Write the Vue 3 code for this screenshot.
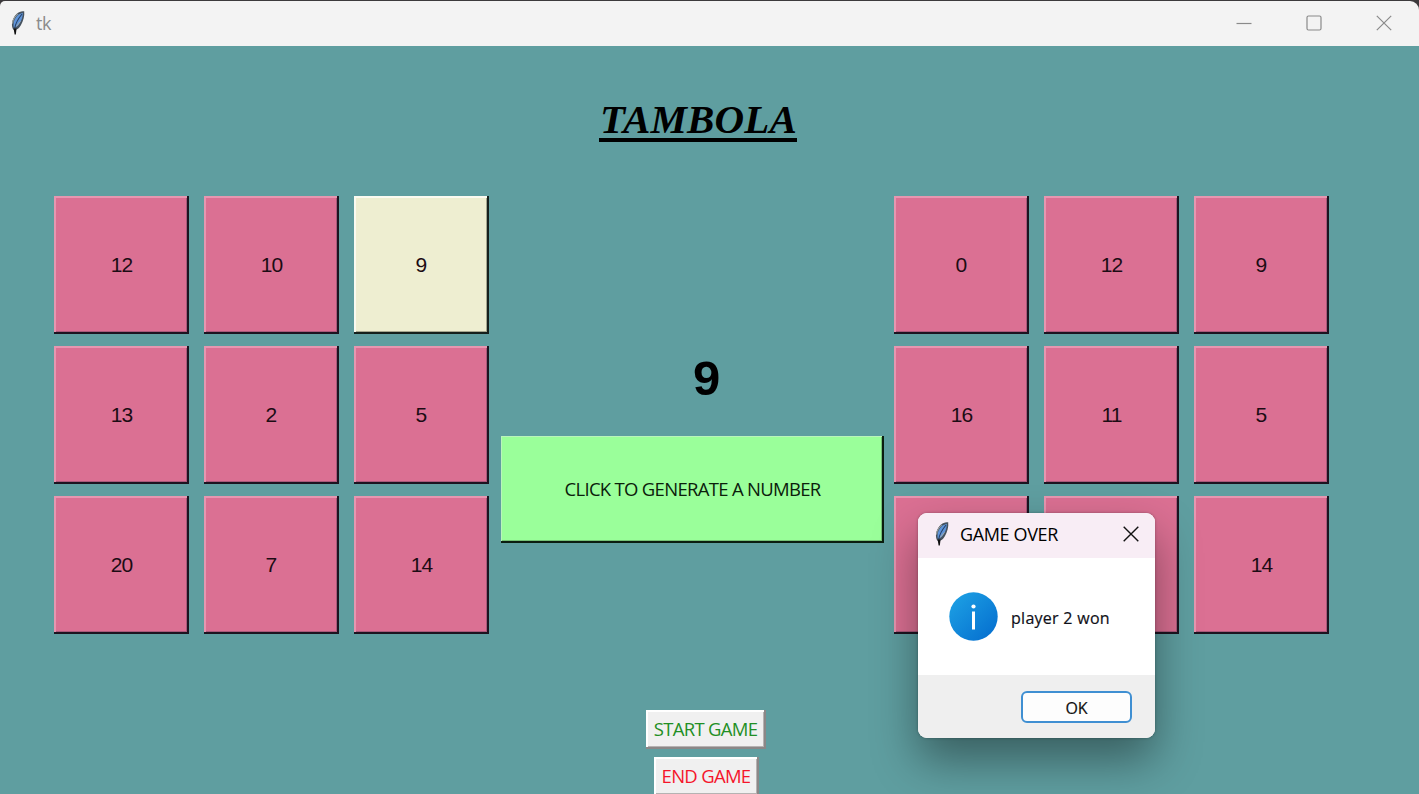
<script setup>
const leftTicket = [12, 10, 9, 13, 2, 5, 20, 7, 14]
const rightTicket = [0, 12, 9, 16, 11, 5, '', '', 14]
const boards = [
  { side: 'left', cells: leftTicket, marked: [2] },
  { side: 'right', cells: rightTicket, marked: [] },
]
</script>

<template>
  <div class="window">
    <header class="titlebar">
      <svg class="feather" width="16" height="26" viewBox="0 0 16 26">
        <path d="M3.800 20C0.800 17 1.300 9 6.500 4C9 1.500 12 0.800 14.200 1.300C14.800 6 13.300 11 11 15C9 18.500 7 19.500 5.200 20Z" fill="#46525e" />
        <path d="M3.800 17.500C2.800 12 5 7.500 8.500 4.500L12.800 2.700C13 6.500 11.500 10.500 9.500 13.500C8 16 6 17.500 3.800 17.500Z" fill="#5f94d8" />
        <path d="M2.500 13.500C3 9.500 5 6 8 3.800M6 16.500L10.500 11.500" stroke="#a3a9a6" stroke-width="1" fill="none" />
        <path d="M12 4C8 9 5.500 13.500 4.800 18" stroke="#24406a" stroke-width="1.100" fill="none" />
        <path d="M3.600 18.500H6.600L5.800 24.500H4.600Z" fill="#101010" />
      </svg>
      <span class="app-name">tk</span>
      <div class="controls">
        <svg width="16" height="16" viewBox="0 0 16 16"><path d="M0.500 8.500H15.500" /></svg>
        <svg width="16" height="16" viewBox="0 0 16 16"><rect x="1" y="1" width="14" height="14" rx="1.500" /></svg>
        <svg width="16" height="16" viewBox="0 0 16 16"><path d="M0.800 0.800L15.200 15.200M15.200 0.800L0.800 15.200" /></svg>
      </div>
    </header>

    <main class="game">
      <h1 class="title"><span class="word">TAMBOLA</span></h1>
      <section class="table">
        <div v-for="b in boards" :key="b.side" class="board" :class="b.side">
          <button v-for="(n, i) in b.cells" :key="i" class="cell" :class="{ marked: b.marked.includes(i), single: n < 10 }">{{ n }}</button>
        </div>
        <div class="caller">
          <div class="drawn">9</div>
          <button class="generate"><span>CLICK TO GENERATE A NUMBER</span></button>
        </div>
      </section>
      <footer class="actions">
        <button class="start"><span>START GAME</span></button>
        <button class="end"><span>END GAME</span></button>
      </footer>
    </main>

    <div class="dialog">
      <div class="dialog-bar">
        <svg class="feather" width="16" height="26" viewBox="0 0 16 26">
          <path d="M3.800 20C0.800 17 1.300 9 6.500 4C9 1.500 12 0.800 14.200 1.300C14.800 6 13.300 11 11 15C9 18.500 7 19.500 5.200 20Z" fill="#46525e" />
          <path d="M3.800 17.500C2.800 12 5 7.500 8.500 4.500L12.800 2.700C13 6.500 11.500 10.500 9.500 13.500C8 16 6 17.500 3.800 17.500Z" fill="#5f94d8" />
          <path d="M2.500 13.500C3 9.500 5 6 8 3.800M6 16.500L10.500 11.500" stroke="#a3a9a6" stroke-width="1" fill="none" />
          <path d="M12 4C8 9 5.500 13.500 4.800 18" stroke="#24406a" stroke-width="1.100" fill="none" />
          <path d="M3.600 18.500H6.600L5.800 24.500H4.600Z" fill="#101010" />
        </svg>
        <span class="dialog-title">GAME OVER</span>
        <svg class="dialog-close" width="16" height="16" viewBox="0 0 16 16"><path d="M0.700 0.700L15.300 15.300M15.300 0.700L0.700 15.300" /></svg>
      </div>
      <div class="dialog-body">
        <svg width="49" height="49" viewBox="0 0 49 49">
          <defs>
            <linearGradient id="info" x1="0" y1="0" x2="1" y2="1">
              <stop offset="0.100" stop-color="#1c9ee3" />
              <stop offset="0.900" stop-color="#0671d0" />
            </linearGradient>
          </defs>
          <circle cx="24.500" cy="24.500" r="24.200" fill="url(#info)" />
          <circle cx="24.500" cy="14.500" r="2.100" fill="#fff" />
          <rect x="23" y="19.500" width="3" height="18" fill="#fff" />
        </svg>
        <span class="message">player 2 won</span>
      </div>
      <div class="dialog-foot"><button class="ok">OK</button></div>
    </div>
  </div>
</template>

<style>
body {
  overflow: hidden;
  background: #3c3a3c;
}
</style>

<style scoped>
.window {
  position: relative;
  width: 1419px;
  height: 794px;
  overflow: hidden;
  box-sizing: border-box;
  padding-top: 1px;
  background: #3c3a3c;
  font-family: "Open Sans", "Noto Sans", sans-serif;
}
button {
  box-sizing: border-box;
  padding: 0;
  font-family: inherit;
  border-radius: 0;
  white-space: nowrap;
}
.titlebar {
  display: flex;
  align-items: center;
  height: 45px;
  box-sizing: border-box;
  padding: 0 27px 2px 10px;
  background: #f3f3f3;
  border-radius: 5px 9px 0 0;
}
.app-name {
  margin-left: 10px;
  font-size: 18px;
  line-height: 24px;
  letter-spacing: -0.5px;
  color: #8b8b8b;
}
.controls {
  display: flex;
  gap: 54px;
  margin-left: auto;
}
.controls svg {
  fill: none;
  stroke: #8a8a8a;
  stroke-width: 1.2;
}
.game {
  height: 748px;
  background: #5f9ea0;
  overflow: hidden;
}
.title {
  margin: 0;
  height: 150px;
  box-sizing: border-box;
  padding: 50px 0 0 599px;
  font: italic bold 41px/46px "Liberation Serif", serif;
  color: #000;
}
.word {
  display: inline-block;
  box-sizing: border-box;
  width: 198px;
  height: 46px;
  border-bottom: 4px solid #000;
  white-space: nowrap;
  padding-left: 1px;
  letter-spacing: 0.15px;
}
.table {
  display: grid;
  grid-template-columns: 435px 405px 435px;
  padding-left: 54px;
}
.board {
  grid-row: 1;
  display: grid;
  grid-template-columns: repeat(3, 135px);
  grid-auto-rows: 138px;
  gap: 12px 15px;
}
.left {
  grid-column: 1;
}
.right {
  grid-column: 3;
}
.caller {
  grid-column: 2;
  grid-row: 1;
  padding: 155px 0 0 12px;
}
.cell {
  padding: 0 0 1px;
  border: none;
  background: #db7093;
  box-shadow: inset -2px -2px #1c1420, inset 2px 2px #e796b0, inset -3px -3px #a8587a;
  font: 21px "Liberation Sans", sans-serif;
  letter-spacing: -0.9px;
  color: #1c0c14;
}
.cell.single {
  padding-right: 1px;
}
.cell.marked {
  background: #eeeed1;
  box-shadow: inset -2px -2px #15201c, inset 2px 2px #fafaf0, inset -3px -3px #a5a58e;
}
.drawn {
  height: 85px;
  box-sizing: border-box;
  padding-left: 192px;
  font: bold 49px/54px "Liberation Sans", sans-serif;
  color: #000;
}
.generate {
  width: 383px;
  height: 107px;
  padding-bottom: 2px;
  border: none;
  background: #9aff9a;
  box-shadow: inset -2px -2px #0c1e10, inset 1px 1px #b9f5bb, inset -3px -3px #76c276;
  font-size: 18.5px;
  color: #0b200b;
}
.generate span {
  letter-spacing: -0.7px;
}
.actions {
  display: flex;
  flex-direction: column;
  align-items: flex-start;
  gap: 8px;
  padding: 76px 0 0 646px;
}
.actions button {
  height: 39px;
  padding: 0 1px 2px 0;
  border: none;
  background: #f0f0f0;
  box-shadow: inset -2px -2px #8b8787, inset 2px 2px #fff, inset -3px -3px #b5b2b2;
  font-size: 18.5px;
}
.actions .start {
  width: 120px;
  color: #1f8f24;
}
.actions .end {
  width: 105px;
  margin-left: 8px;
  color: #f5152b;
}
.actions span {
  letter-spacing: -0.7px;
}
.dialog {
  position: absolute;
  left: 918px;
  top: 513px;
  width: 237px;
  height: 225px;
  border-radius: 9px;
  overflow: hidden;
  background: #fff;
  box-shadow: 0 22px 46px rgba(0, 0, 0, 0.4), 0 0 3px rgba(0, 0, 0, 0.3);
  display: flex;
  flex-direction: column;
}
.dialog-bar {
  display: flex;
  align-items: center;
  height: 45px;
  box-sizing: border-box;
  padding: 0 16px 3px 16px;
  background: #f8edf5;
}
.dialog-title {
  margin-left: 10px;
  font-size: 18px;
  letter-spacing: -0.35px;
  color: #000;
}
.dialog-close {
  margin-left: auto;
  stroke: #111;
  stroke-width: 1.4;
}
.dialog-body {
  display: flex;
  align-items: center;
  height: 117px;
  padding-left: 31px;
}
.message {
  margin: 3px 0 0 13px;
  font-size: 16px;
  letter-spacing: 0.28px;
  color: #101018;
  -webkit-text-stroke: 0.2px #101018;
}
.dialog-foot {
  flex: 1;
  display: flex;
  justify-content: flex-end;
  padding: 16px 23px 0 0;
  background: #efefef;
}
.ok {
  width: 111px;
  height: 32px;
  padding-top: 1px;
  border: 2px solid #3f8fd2;
  border-radius: 6px;
  background: #fdfdfd;
  font-size: 16px;
  color: #111;
  -webkit-text-stroke: 0.2px #111;
}
</style>
